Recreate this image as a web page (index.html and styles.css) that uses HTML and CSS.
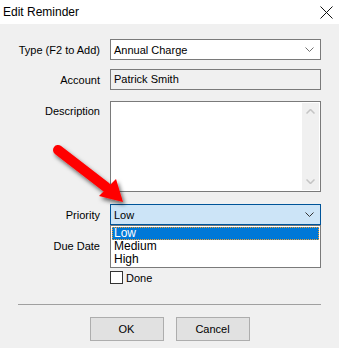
FILE: index.html
```html
<!DOCTYPE html>
<html lang="en">
<head>
  <meta charset="UTF-8">
  <title>Edit Reminder</title>
  <link rel="stylesheet" href="styles.css">
</head>
<body>
  <div class="titlebar">
    <span class="title">Edit Reminder</span>
    <svg class="close" width="13" height="13" viewBox="0 0 13 13">
      <path d="M0.5 0.5 L12.5 12.5 M12.5 0.5 L0.5 12.5" stroke="#111" stroke-width="1"/>
    </svg>
  </div>

  <div class="form">
    <div class="row row-type">
      <label class="lbl">Type (F2 to Add)</label>
      <div class="combo">
        <span>Annual Charge</span>
        <svg class="chev" width="9" height="5" viewBox="0 0 9 5"><path d="M0.5 0.5 L4.5 4.5 L8.5 0.5" fill="none" stroke="#707070"/></svg>
      </div>
    </div>

    <div class="row row-account">
      <label class="lbl">Account</label>
      <div class="field readonly">Patrick Smith</div>
    </div>

    <div class="row row-desc">
      <label class="lbl">Description</label>
      <div class="memo">
        <div class="scroll">
          <svg width="9" height="5" viewBox="0 0 9 5"><path d="M0.5 4.5 L4.5 0.5 L8.5 4.5" fill="none" stroke="#c4c4c4" stroke-width="1.5"/></svg>
          <svg width="9" height="5" viewBox="0 0 9 5"><path d="M0.5 0.5 L4.5 4.5 L8.5 0.5" fill="none" stroke="#c4c4c4" stroke-width="1.5"/></svg>
        </div>
      </div>
    </div>

    <div class="row row-priority">
      <label class="lbl">Priority</label>
      <div class="combo focused">
        <span>Low</span>
        <svg class="chev" width="9" height="5" viewBox="0 0 9 5"><path d="M0.5 0.5 L4.5 4.5 L8.5 0.5" fill="none" stroke="#333"/></svg>
        <ul class="dropdown">
          <li class="selected">Low</li>
          <li>Medium</li>
          <li>High</li>
        </ul>
      </div>
    </div>

    <div class="row row-due">
      <label class="lbl">Due Date</label>
      <div class="field"></div>
    </div>

    <div class="row row-done">
      <span class="lbl"></span>
      <label class="check"><span class="box"></span>Done</label>
    </div>

    <hr class="sep">

    <div class="buttons">
      <button class="btn">OK</button>
      <button class="btn">Cancel</button>
    </div>
  </div>

  <svg class="arrow" width="339" height="348" viewBox="0 0 339 348">
    <defs>
      <filter id="shadow" x="-20%" y="-20%" width="140%" height="140%">
        <feDropShadow dx="2" dy="3" stdDeviation="2" flood-color="#000" flood-opacity="0.6"/>
      </filter>
    </defs>
    <g filter="url(#shadow)">
      <line x1="58" y1="150" x2="106" y2="187" stroke="#f00" stroke-width="10" stroke-linecap="round"/>
      <polygon points="99,196 116,179 123,202" fill="#f00"/>
    </g>
  </svg>
</body>
</html>
```

FILE: styles.css
```css
* {
  box-sizing: border-box;
}

body {
  margin: 0;
  width: 339px;
  height: 348px;
  background: #f0f0f0;
  font-family: 'Liberation Sans', Arial, sans-serif;
  font-size: 11px;
  color: #000;
  position: relative;
  overflow: hidden;
}

.titlebar {
  height: 24px;
  background: #fff;
  display: flex;
  align-items: center;
  justify-content: space-between;
  padding: 0 6px 0 3px;
}

.title {
  font-size: 12px;
}

.form {
  padding-top: 15px;
}

.row {
  display: flex;
  align-items: center;
}

.lbl {
  width: 100px;
  margin-right: 10px;
  text-align: right;
}

.combo,
.field,
.memo {
  width: 211px;
  height: 21px;
  border: 1px solid #7a7a7a;
  background: #fff;
  position: relative;
}

.combo {
  display: flex;
  align-items: center;
  justify-content: space-between;
  padding: 0 6px 0 3px;
}

.combo.focused {
  background: #cce4f7;
  border-color: #005499;
}

.field {
  padding: 3px 3px;
}

.readonly {
  background: #f0f0f0;
}

.row-account {
  margin-top: 9px;
}

.row-desc {
  margin-top: 11px;
  align-items: flex-start;
}

.row-desc .lbl {
  padding-top: 4px;
}

.memo {
  height: 91px;
  display: flex;
  justify-content: flex-end;
  padding: 1px;
}

.scroll {
  width: 17px;
  background: #f0f0f0;
  display: flex;
  flex-direction: column;
  justify-content: space-between;
  align-items: center;
  padding: 6px 0 6px;
}

.row-priority {
  margin-top: 12px;
}

.dropdown {
  position: absolute;
  top: 20px;
  left: -1px;
  width: 211px;
  margin: 0;
  padding: 1px;
  list-style: none;
  background: #fff;
  border: 1px solid #7a7a7a;
  z-index: 2;
}

.dropdown li {
  height: 13px;
  line-height: 13px;
  padding-left: 2px;
  font-size: 12px;
}

.dropdown li.selected {
  background: #0078d7;
  color: #fff;
  outline: 1px dotted #f0a030;
  outline-offset: -1px;
}

.row-due {
  margin-top: 10px;
}

.row-done {
  margin-top: 15px;
}

.check {
  display: flex;
  align-items: center;
  gap: 3px;
  height: 13px;
}

.box {
  width: 13px;
  height: 13px;
  border: 1px solid #333;
  background: #fff;
}

.sep {
  margin: 20px 18px 0 18px;
  border: none;
  border-top: 1px solid #a0a0a0;
  width: 303px;
}

.buttons {
  margin-top: 12px;
  display: flex;
  justify-content: center;
  gap: 12px;
}

.btn {
  width: 74px;
  height: 24px;
  border: 1px solid #adadad;
  background: #e1e1e1;
  font-family: inherit;
  font-size: 11px;
  color: #000;
  padding: 0;
}

.arrow {
  position: absolute;
  top: 0;
  left: 0;
  pointer-events: none;
  z-index: 3;
}
```
